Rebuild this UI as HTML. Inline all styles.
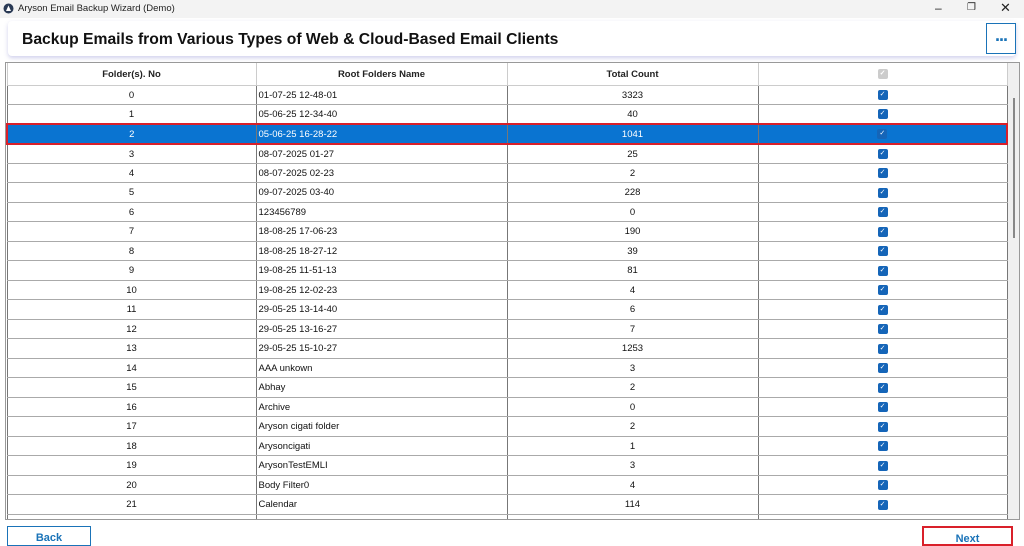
<!DOCTYPE html>
<html><head><style>
*{margin:0;padding:0;box-sizing:border-box}
body{width:1024px;height:539px;overflow:hidden;background:#fff;font-family:"Liberation Sans",Arial,sans-serif;position:relative}
.tb{position:absolute;left:0;top:0;width:1024px;height:18px;background:#f3f3f3;font-size:9.5px;color:#222}
.tb .t{position:absolute;left:18px;top:3px}
.hdr{position:absolute;left:8px;top:21px;width:1008px;height:35px;background:#fff;border-radius:4px;box-shadow:0 2px 4px rgba(120,120,200,.35)}
.hdr h1{position:absolute;left:14px;top:10px;font-size:15.7px;font-weight:bold;color:#111}
.dots{position:absolute;left:986px;top:23px;width:30px;height:31px;border:1.5px solid #1a73b8;background:#fff;color:#1a73b8;font-weight:bold;font-size:18px;text-align:center;line-height:22px;letter-spacing:-1px}
.grid{position:absolute;left:5px;top:62px;width:1015px;height:458px;border:1px solid #999;overflow:hidden;background:#fff}
.sb{position:absolute;right:0;top:0;width:12px;height:100%;background:#f0f0f0}
.sb i{position:absolute;left:6px;top:35px;width:2px;height:140px;background:#888}
table{border-collapse:collapse;position:absolute;left:0;top:0;width:1002px;font-size:9.5px;color:#111}
td,th{height:19.5px;border:1px solid #888;text-align:center;padding:0;padding-top:1px}
th{height:22px;font-weight:bold;border-top:none;border-color:#ccc;color:#222}
td:nth-child(2){text-align:left;padding-left:2px}
td{border-left-color:#777;border-right-color:#777;border-top-color:#aaa;border-bottom-color:#aaa}
.cb{display:inline-block;width:10px;height:10px;background:#1565b8;border-radius:2px;color:#fff;font-size:7px;line-height:10px;vertical-align:middle}
.cbg{background:#ccc}
tr.sel td{background:#0a74d1;color:#fff;border-top:2px solid #d9202a;border-bottom:2px solid #d9202a}
tr.sel td:first-child{border-left:2px solid #d9202a}
tr.sel td:last-child{border-right:2px solid #d9202a}
.btn{position:absolute;top:526px;height:20px;background:#fff;font-size:11px;font-weight:bold;color:#1a73b8;text-align:center;padding-top:5px}
</style></head><body>
<div class="tb"><svg style="position:absolute;left:3px;top:3px" width="11" height="11"><circle cx="5.5" cy="5.5" r="5" fill="#2a3a55"/><path d="M3 8 L5.5 2.5 L8 8 Z" fill="#fff"/></svg><span class="t">Aryson Email Backup Wizard (Demo)</span>
<span style="position:absolute;left:935px;top:1px;font-size:12px">–</span>
<span style="position:absolute;left:967px;top:2px;font-size:10px">❐</span>
<span style="position:absolute;left:1000px;top:0px;font-size:13px">✕</span></div>
<div class="hdr"><h1>Backup Emails from Various Types of Web &amp; Cloud-Based Email Clients</h1></div>
<div class="dots">...</div>
<div class="grid"><div class="sb"><i></i></div>
<table>
<tr><th style="width:249px">Folder(s). No</th><th style="width:251px">Root Folders Name</th><th style="width:251px">Total Count</th><th><span class="cb cbg">✓</span></th></tr>
<tr><td>0</td><td>01-07-25 12-48-01</td><td>3323</td><td><span class="cb">✓</span></td></tr>
<tr><td>1</td><td>05-06-25 12-34-40</td><td>40</td><td><span class="cb">✓</span></td></tr>
<tr class="sel"><td>2</td><td>05-06-25 16-28-22</td><td>1041</td><td><span class="cb">✓</span></td></tr>
<tr><td>3</td><td>08-07-2025 01-27</td><td>25</td><td><span class="cb">✓</span></td></tr>
<tr><td>4</td><td>08-07-2025 02-23</td><td>2</td><td><span class="cb">✓</span></td></tr>
<tr><td>5</td><td>09-07-2025 03-40</td><td>228</td><td><span class="cb">✓</span></td></tr>
<tr><td>6</td><td>123456789</td><td>0</td><td><span class="cb">✓</span></td></tr>
<tr><td>7</td><td>18-08-25 17-06-23</td><td>190</td><td><span class="cb">✓</span></td></tr>
<tr><td>8</td><td>18-08-25 18-27-12</td><td>39</td><td><span class="cb">✓</span></td></tr>
<tr><td>9</td><td>19-08-25 11-51-13</td><td>81</td><td><span class="cb">✓</span></td></tr>
<tr><td>10</td><td>19-08-25 12-02-23</td><td>4</td><td><span class="cb">✓</span></td></tr>
<tr><td>11</td><td>29-05-25 13-14-40</td><td>6</td><td><span class="cb">✓</span></td></tr>
<tr><td>12</td><td>29-05-25 13-16-27</td><td>7</td><td><span class="cb">✓</span></td></tr>
<tr><td>13</td><td>29-05-25 15-10-27</td><td>1253</td><td><span class="cb">✓</span></td></tr>
<tr><td>14</td><td>AAA unkown</td><td>3</td><td><span class="cb">✓</span></td></tr>
<tr><td>15</td><td>Abhay</td><td>2</td><td><span class="cb">✓</span></td></tr>
<tr><td>16</td><td>Archive</td><td>0</td><td><span class="cb">✓</span></td></tr>
<tr><td>17</td><td>Aryson cigati folder</td><td>2</td><td><span class="cb">✓</span></td></tr>
<tr><td>18</td><td>Arysoncigati</td><td>1</td><td><span class="cb">✓</span></td></tr>
<tr><td>19</td><td>ArysonTestEMLI</td><td>3</td><td><span class="cb">✓</span></td></tr>
<tr><td>20</td><td>Body Filter0</td><td>4</td><td><span class="cb">✓</span></td></tr>
<tr><td>21</td><td>Calendar</td><td>114</td><td><span class="cb">✓</span></td></tr>
<tr><td>22</td><td>Chats</td><td>1</td><td><span class="cb">✓</span></td></tr>
</table></div>
<div class="btn" style="left:7px;width:84px;border:1.5px solid #1a73b8">Back</div>
<div class="btn" style="left:922px;width:91px;border:2px solid #d9202a">Next</div>
</body></html>
